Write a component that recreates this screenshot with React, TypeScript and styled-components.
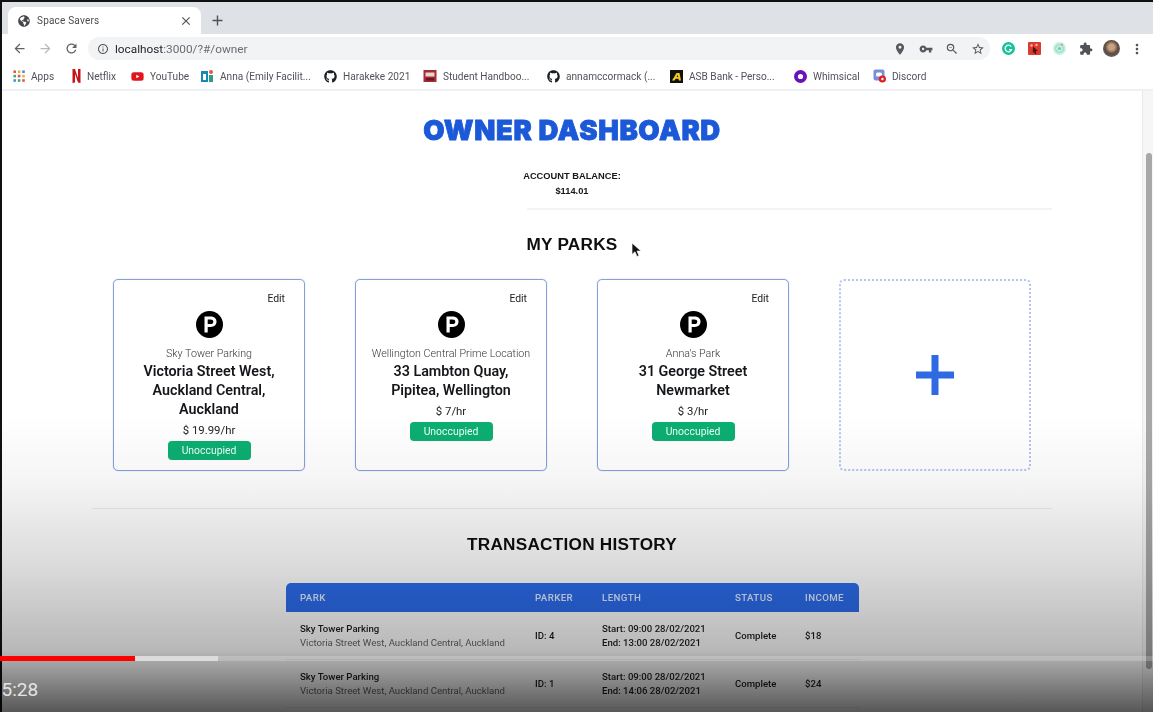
import styled, { createGlobalStyle } from 'styled-components';
import { FaGithub, FaGlobeAmericas, FaYoutube } from 'react-icons/fa';
import {
  MdAdd,
  MdArrowBack,
  MdArrowForward,
  MdClose,
  MdExtension,
  MdInfoOutline,
  MdLocationOn,
  MdMoreVert,
  MdRefresh,
  MdStarBorder,
  MdVpnKey,
  MdZoomOut,
} from 'react-icons/md';

const GlobalStyle = createGlobalStyle`
  html, body {
    margin: 0;
    padding: 0;
    background: #000;
    overflow: hidden;
  }
`;

const Player = styled.div`
  position: relative;
  width: 1153px;
  height: 712px;
  overflow: hidden;
  background: #111;
  padding: 2px 0 0 2px;
  box-sizing: border-box;
  font-family: Roboto, sans-serif;
`;

const Browser = styled.div`
  display: flex;
  flex-direction: column;
  height: 100%;
  background: #fff;
  filter: blur(0.35px);
`;

const TabStrip = styled.div`
  display: flex;
  align-items: flex-end;
  height: 32px;
  padding-left: 6px;
  background: #dee1e6;
  flex-shrink: 0;
`;

const Tab = styled.div`
  display: flex;
  align-items: center;
  width: 193px;
  height: 27px;
  padding: 0 8px 0 10px;
  box-sizing: border-box;
  background: #fff;
  border-radius: 8px 8px 0 0;
  color: #4a4c50;
  font-size: 10px;
  svg:first-child {
    color: #45474b;
    margin-right: 7px;
    font-size: 12px;
  }
  span {
    flex: 1;
    letter-spacing: 0.2px;
  }
  svg:last-child {
    color: #4f5256;
    font-size: 14px;
  }
`;

const NewTab = styled.div`
  display: flex;
  align-items: center;
  height: 27px;
  margin-left: 8px;
  color: #4f5256;
  font-size: 17px;
`;

const Toolbar = styled.div`
  display: flex;
  align-items: center;
  height: 29px;
  padding-left: 4px;
  background: #fff;
  color: #63666a;
  flex-shrink: 0;
`;

const NavButton = styled.div<{ $faded?: boolean }>`
  display: flex;
  width: 26px;
  justify-content: center;
  font-size: 15px;
  color: ${(p) => (p.$faded ? '#b5b8bc' : '#5f6368')};
`;

const Omnibox = styled.div`
  display: flex;
  align-items: center;
  flex-shrink: 0;
  width: 902px;
  height: 23px;
  margin-left: 4px;
  padding: 0 9px;
  box-sizing: border-box;
  background: #f1f3f4;
  border-radius: 12px;
  font-size: 11.8px;
  color: #6a6d71;
  > svg:first-child {
    font-size: 12px;
    margin-right: 6px;
    color: #55585c;
  }
  b {
    font-weight: 400;
    color: #24272b;
  }
`;

const Url = styled.span`
  flex: 1;
`;

const OmniIcons = styled.div`
  display: flex;
  align-items: center;
  gap: 12px;
  font-size: 14px;
  color: #55585c;
  margin-right: -4px;
`;

const Extensions = styled.div`
  display: flex;
  align-items: center;
  margin-left: 6px;
  font-size: 14px;
`;

const ExtensionSlot = styled.div`
  display: flex;
  justify-content: center;
  width: 25.6px;
`;

const Avatar = styled.div`
  width: 17px;
  height: 17px;
  border-radius: 50%;
  background: radial-gradient(circle at 50% 42%, #c6a283 0 22%, #5e4a3e 50%, #76708a 100%);
`;

const Bookmarks = styled.div`
  display: flex;
  align-items: center;
  height: 26px;
  padding-left: 11px;
  background: #fff;
  border-bottom: 2px solid #eef0f3;
  font-size: 10.1px;
  color: #50535a;
  flex-shrink: 0;
`;

const Bookmark = styled.div<{ $width: number }>`
  display: flex;
  align-items: center;
  gap: 6px;
  width: ${(p) => p.$width}px;
  white-space: nowrap;
  svg {
    flex-shrink: 0;
  }
`;

const Viewport = styled.div`
  display: flex;
  flex: 1;
  min-height: 0;
`;

const Page = styled.main`
  flex: 1;
  display: flex;
  flex-direction: column;
  align-items: center;
  padding: 23px 0 0 0;
  overflow: hidden;
`;

const Title = styled.h1`
  margin: 0;
  font-family: Inter, sans-serif;
  font-size: 27.5px;
  font-weight: 900;
  line-height: 32px;
  letter-spacing: 0.6px;
  color: #1c59d8;
  -webkit-text-stroke: 0.8px #1c59d8;
`;

const Balance = styled.div`
  margin-top: 23px;
  font-family: 'Liberation Sans', sans-serif;
  font-size: 9.3px;
  font-weight: 700;
  line-height: 14.5px;
  color: #171717;
  text-align: center;
`;

const ShortRule = styled.hr`
  align-self: flex-start;
  width: 525px;
  height: 2px;
  margin: 10px 0 0 525px;
  border: 0;
  background: #f4f4f4;
`;

const SectionTitle = styled.h2`
  margin: 0;
  font-family: 'Liberation Sans', sans-serif;
  font-size: 17.2px;
  font-weight: 700;
  line-height: 22px;
  letter-spacing: 0.25px;
  color: #0e0e0e;
`;

const ParksTitle = styled(SectionTitle)`
  margin-top: 23px;
`;

const HistoryTitle = styled(SectionTitle)`
  margin-top: 24px;
`;

const ParkGrid = styled.div`
  display: grid;
  grid-template-columns: repeat(4, 192px);
  column-gap: 50px;
  margin-top: 24px;
`;

const ParkCard = styled.article`
  display: flex;
  flex-direction: column;
  align-items: center;
  height: 192px;
  padding: 13px 12px 0;
  box-sizing: border-box;
  border: 1px solid #86a0dc;
  border-radius: 5px;
  box-shadow: 0 0 1px #86a0d8;
  text-align: center;
`;

const EditLink = styled.span`
  align-self: flex-end;
  margin-right: 7px;
  font-size: 10.4px;
  line-height: 12px;
  color: #222;
`;

const ParkBadge = styled.svg`
  width: 27px;
  height: 27px;
  margin-top: 6px;
`;

const ParkName = styled.div`
  margin-top: 9px;
  font-size: 10.7px;
  font-weight: 300;
  line-height: 14px;
  color: #34373c;
  white-space: nowrap;
`;

const ParkAddress = styled.div`
  margin: 1px 8px 0;
  font-size: 14.3px;
  font-weight: 600;
  line-height: 19px;
  color: #14161a;
`;

const ParkRate = styled.div`
  margin-top: 3px;
  font-size: 11.4px;
  line-height: 16px;
  color: #222;
`;

const StatusPill = styled.div`
  width: 83px;
  height: 19px;
  margin-top: 3px;
  border-radius: 4px;
  background: #0cae72;
  color: #eafff5;
  font-size: 10.4px;
  line-height: 19px;
`;

const AddCard = styled.article`
  display: flex;
  align-items: center;
  justify-content: center;
  height: 192px;
  box-sizing: border-box;
  border: 2px dotted #b4c4ec;
  border-radius: 5px;
  color: #2f6ae2;
`;

const WideRule = styled.hr`
  width: 960px;
  height: 1px;
  margin: 37px 0 0;
  border: 0;
  background: #ececec;
`;

const TableCard = styled.table`
  width: 573px;
  margin-top: 28px;
  border-collapse: separate;
  border-spacing: 0;
  table-layout: fixed;
  font-size: 9.6px;
  color: #1c1c1c;
`;

const HeadCell = styled.th`
  height: 29px;
  padding: 0 0 0 14.5px;
  background: #2c6cec;
  color: #e2ecff;
  font-size: 9.7px;
  font-weight: 500;
  letter-spacing: 0.4px;
  text-align: left;
  &:first-child {
    border-radius: 5px 0 0 0;
  }
  &:last-child {
    border-radius: 0 5px 0 0;
  }
`;

const BodyCell = styled.td`
  height: 48px;
  padding: 1px 0 0 14.5px;
  box-sizing: border-box;
  line-height: 14.5px;
  white-space: nowrap;
  border-bottom: 1px solid #eeeeee;
  font-weight: 500;
`;

const SubLine = styled.div`
  color: #62646a;
  font-weight: 400;
`;

const Scrollbar = styled.div`
  display: flex;
  width: 11px;
  padding: 62px 1px 0 3px;
  box-sizing: border-box;
  background: #f6f6f6;
  border-left: 1px solid #e9e9e9;
  flex-shrink: 0;
`;

const ScrollThumb = styled.div`
  width: 100%;
  height: 516px;
  background: #a8a8a8;
  border-radius: 3px;
`;

const Cursor = styled.svg`
  position: absolute;
  left: 631px;
  top: 242px;
  width: 11px;
  height: 16px;
`;

const ControlsShade = styled.div`
  position: absolute;
  inset: 0;
  pointer-events: none;
  background: linear-gradient(
    to bottom,
    rgba(0, 0, 0, 0) 415px,
    rgba(0, 0, 0, 0.04) 480px,
    rgba(0, 0, 0, 0.15) 570px,
    rgba(0, 0, 0, 0.28) 650px,
    rgba(0, 0, 0, 0.66) 712px
  );
`;

const Progress = styled.div`
  position: absolute;
  left: 0;
  right: 0;
  top: 656px;
  display: flex;
  height: 5px;
  background: rgba(255, 255, 255, 0.2);
`;

const ProgressPart = styled.div<{ $width: number; $color: string }>`
  width: ${(p) => p.$width}px;
  background: ${(p) => p.$color};
`;

const TimeLabel = styled.div`
  position: absolute;
  left: 1.5px;
  top: 679px;
  color: #e4e4e4;
  font-size: 19px;
  line-height: 22px;
`;

const parks = [
  { name: 'Sky Tower Parking', address: 'Victoria Street West, Auckland Central, Auckland', rate: '$ 19.99/hr' },
  { name: 'Wellington Central Prime Location', address: '33 Lambton Quay, Pipitea, Wellington', rate: '$ 7/hr' },
  { name: "Anna's Park", address: '31 George Street Newmarket', rate: '$ 3/hr' },
];

const transactions = [
  { parker: 'ID: 4', end: 'End: 13:00 28/02/2021', income: '$18' },
  { parker: 'ID: 1', end: 'End: 14:06 28/02/2021', income: '$24' },
];

const AppsIcon = () => (
  <svg width="12" height="12" viewBox="0 0 12 12">
    {[0, 1, 2].map((r) =>
      [0, 1, 2].map((c) => (
        <rect
          key={`${r}-${c}`}
          x={c * 4.4 + 0.4}
          y={r * 4.4 + 0.4}
          width="2.6"
          height="2.6"
          fill={['#e2574c', '#f2b035', '#4a90d9', '#49a86b', '#e2574c', '#f2b035', '#4a90d9', '#49a86b', '#e2574c'][r * 3 + c]}
        />
      )),
    )}
  </svg>
);

const NetflixIcon = () => (
  <svg width="9" height="14" viewBox="0 0 9 14">
    <path d="M0.5 0H3L6 9V0H8.500V14L6 13.400L3 5V13.400L0.500 14Z" fill="#c81118" />
  </svg>
);

const FacilitatorIcon = () => (
  <svg width="14" height="14" viewBox="0 0 14 14">
    <rect x="1" y="2" width="7" height="11" fill="#1a87b8" />
    <rect x="3" y="5" width="3" height="6" fill="#fff" />
    <rect x="9" y="6" width="4" height="7" fill="#2c9c8f" />
    <circle cx="11" cy="3" r="2" fill="#e8563f" />
  </svg>
);

const HandbookIcon = () => (
  <svg width="14" height="14" viewBox="0 0 14 14">
    <rect x="0.5" y="1" width="13" height="12" fill="#a52a3a" />
    <rect x="2.5" y="3.5" width="9" height="4" fill="#e8d6c8" />
    <rect x="3" y="9" width="8" height="2.5" fill="#6d1623" />
  </svg>
);

const AsbIcon = () => (
  <svg width="13" height="13" viewBox="0 0 13 13">
    <rect width="13" height="13" fill="#111" />
    <path d="M2 10.500L6.500 3H9.500L11 10.500H8.800L8.500 8.800H5.600L4.600 10.500ZM6.600 7H8.200L7.900 5Z" fill="#f4c820" />
  </svg>
);

const WhimsicalIcon = () => (
  <svg width="13" height="13" viewBox="0 0 13 13">
    <circle cx="6.5" cy="6.5" r="6.5" fill="#6a12b8" />
    <circle cx="6.5" cy="6.5" r="2.6" fill="#fff" />
  </svg>
);

const DiscordIcon = () => (
  <svg width="13" height="14" viewBox="0 0 13 14">
    <rect x="0.5" y="0.5" width="11" height="11" rx="2" fill="#7b8fd8" />
    <rect x="3" y="3.5" width="6" height="4" rx="1.5" fill="#fff" />
    <circle cx="9.400" cy="10" r="3.600" fill="#e01f26" />
    <circle cx="9.400" cy="10" r="1.200" fill="#fff" />
  </svg>
);

const GrammarlyIcon = () => (
  <svg width="13" height="13" viewBox="0 0 13 13">
    <circle cx="6.5" cy="6.5" r="6.5" fill="#15c39a" />
    <path d="M9.200 4.600A3.300 3.300 0 1 0 9.600 7.600H7" fill="none" stroke="#fff" strokeWidth="1.300" />
  </svg>
);

const ClipperIcon = () => (
  <svg width="13" height="13" viewBox="0 0 13 13">
    <rect width="13" height="13" rx="1" fill="#dc3a2c" />
    <circle cx="3.500" cy="3.500" r="1.200" fill="#f4b5ae" />
    <circle cx="8.500" cy="3" r="1.200" fill="#f4b5ae" />
    <path d="M5 4.500L10 9L7.800 9.300L8.500 11.500L7 12L6 10L4.800 11Z" fill="#4a1512" />
  </svg>
);

const RadarIcon = () => (
  <svg width="13" height="13" viewBox="0 0 13 13">
    <circle cx="6.5" cy="6.5" r="6.5" fill="#c7f0e0" />
    <circle cx="6.5" cy="6.5" r="4" fill="none" stroke="#8adcc0" strokeWidth="1" />
    <circle cx="6.5" cy="6.5" r="1.600" fill="#6bcfae" />
    <circle cx="9" cy="2.500" r="1" fill="#ef8a80" />
  </svg>
);

const App = () => {
  return (
    <Player>
      <GlobalStyle />
      <Browser>
        <TabStrip>
          <Tab>
            <FaGlobeAmericas />
            <span>Space Savers</span>
            <MdClose />
          </Tab>
          <NewTab>
            <MdAdd />
          </NewTab>
        </TabStrip>
        <Toolbar>
          <NavButton>
            <MdArrowBack />
          </NavButton>
          <NavButton $faded>
            <MdArrowForward />
          </NavButton>
          <NavButton>
            <MdRefresh />
          </NavButton>
          <Omnibox>
            <MdInfoOutline />
            <Url>
              <b>localhost</b>:3000/?#/owner
            </Url>
            <OmniIcons>
              <MdLocationOn />
              <MdVpnKey />
              <MdZoomOut />
              <MdStarBorder />
            </OmniIcons>
          </Omnibox>
          <Extensions>
            <ExtensionSlot>
              <GrammarlyIcon />
            </ExtensionSlot>
            <ExtensionSlot>
              <ClipperIcon />
            </ExtensionSlot>
            <ExtensionSlot>
              <RadarIcon />
            </ExtensionSlot>
            <ExtensionSlot>
              <MdExtension color="#4f5256" />
            </ExtensionSlot>
            <ExtensionSlot>
              <Avatar />
            </ExtensionSlot>
            <ExtensionSlot>
              <MdMoreVert size={16} color="#4f5256" />
            </ExtensionSlot>
          </Extensions>
        </Toolbar>
        <Bookmarks>
          <Bookmark $width={59}>
            <AppsIcon />
            Apps
          </Bookmark>
          <Bookmark $width={59}>
            <NetflixIcon />
            Netflix
          </Bookmark>
          <Bookmark $width={69}>
            <FaYoutube size={13} color="#e0161b" />
            YouTube
          </Bookmark>
          <Bookmark $width={124}>
            <FacilitatorIcon />
            Anna (Emily Facilit...
          </Bookmark>
          <Bookmark $width={99}>
            <FaGithub size={13} color="#1b1f23" />
            Harakeke 2021
          </Bookmark>
          <Bookmark $width={124}>
            <HandbookIcon />
            Student Handboo...
          </Bookmark>
          <Bookmark $width={123}>
            <FaGithub size={13} color="#1b1f23" />
            annamccormack (...
          </Bookmark>
          <Bookmark $width={124}>
            <AsbIcon />
            ASB Bank - Perso...
          </Bookmark>
          <Bookmark $width={79}>
            <WhimsicalIcon />
            Whimsical
          </Bookmark>
          <Bookmark $width={60}>
            <DiscordIcon />
            Discord
          </Bookmark>
        </Bookmarks>
        <Viewport>
          <Page>
            <Title>OWNER DASHBOARD</Title>
            <Balance>
              ACCOUNT BALANCE:
              <br />
              $114.01
            </Balance>
            <ShortRule />
            <ParksTitle>MY PARKS</ParksTitle>
            <ParkGrid>
              {parks.map((park) => (
                <ParkCard key={park.name}>
                  <EditLink>Edit</EditLink>
                  <ParkBadge viewBox="0 0 27 27">
                    <circle cx="13.5" cy="13.5" r="13.5" fill="#000" />
                    <path
                      fillRule="evenodd"
                      d="M8.500 21.500V5.500h6.200c3.600 0 5.800 2.100 5.800 5.200s-2.200 5.200-5.800 5.200h-3v5.600zM11.700 13h2.800c1.800 0 2.800-.9 2.800-2.300s-1-2.300-2.800-2.300h-2.800z"
                      fill="#fff"
                    />
                  </ParkBadge>
                  <ParkName>{park.name}</ParkName>
                  <ParkAddress>{park.address}</ParkAddress>
                  <ParkRate>{park.rate}</ParkRate>
                  <StatusPill>Unoccupied</StatusPill>
                </ParkCard>
              ))}
              <AddCard>
                <svg width="38" height="40" viewBox="0 0 38 40">
                  <path d="M15.500 0h7v16.500H38v7H22.500V40h-7V23.500H0v-7h15.500z" fill="currentColor" />
                </svg>
              </AddCard>
            </ParkGrid>
            <WideRule />
            <HistoryTitle>TRANSACTION HISTORY</HistoryTitle>
            <TableCard>
              <colgroup>
                <col width="235" />
                <col width="67" />
                <col width="133" />
                <col width="70" />
                <col width="68" />
              </colgroup>
              <thead>
                <tr>
                  <HeadCell>PARK</HeadCell>
                  <HeadCell>PARKER</HeadCell>
                  <HeadCell>LENGTH</HeadCell>
                  <HeadCell>STATUS</HeadCell>
                  <HeadCell>INCOME</HeadCell>
                </tr>
              </thead>
              <tbody>
                {transactions.map((t) => (
                  <tr key={t.parker}>
                    <BodyCell>
                      Sky Tower Parking
                      <SubLine>Victoria Street West, Auckland Central, Auckland</SubLine>
                    </BodyCell>
                    <BodyCell>{t.parker}</BodyCell>
                    <BodyCell>
                      Start: 09:00 28/02/2021
                      <br />
                      {t.end}
                    </BodyCell>
                    <BodyCell>Complete</BodyCell>
                    <BodyCell>{t.income}</BodyCell>
                  </tr>
                ))}
              </tbody>
            </TableCard>
          </Page>
          <Scrollbar>
            <ScrollThumb />
          </Scrollbar>
        </Viewport>
      </Browser>
      <Cursor viewBox="0 0 11 16">
        <path d="M1 1v11.500l3-2.700 2 4.700 2-.8-2-4.600h4z" fill="#111" stroke="#fff" strokeWidth="0.7" />
      </Cursor>
      <ControlsShade />
      <Progress>
        <ProgressPart $width={135} $color="#f00" />
        <ProgressPart $width={83} $color="#dcdcdc" />
      </Progress>
      <TimeLabel>5:28</TimeLabel>
    </Player>
  );
};

export default App;
